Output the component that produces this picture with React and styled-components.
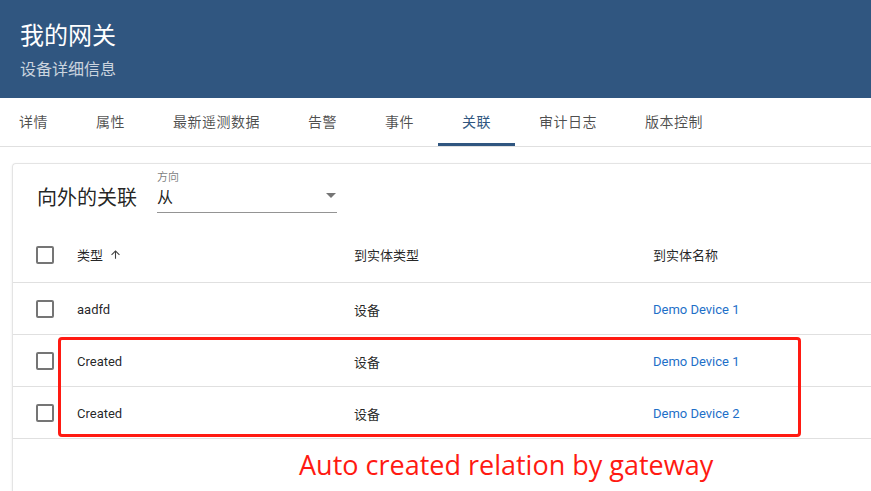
import styled, { createGlobalStyle } from "styled-components";

const GlobalStyle = createGlobalStyle`
  body {
    margin: 0;
    font-family: Roboto, "Noto Sans CJK SC", sans-serif;
    background: #fff;
    overflow: hidden;
  }
`;

const Page = styled.div`
  width: 871px;
  height: 491px;
  position: relative;
  overflow: hidden;
`;

const Header = styled.div`
  background: #305680;
  height: 98px;
  padding: 18px 20px 0;
  box-sizing: border-box;
  color: #fff;
`;

const Title = styled.h1`
  margin: 0;
  font-size: 24px;
  font-weight: 400;
  line-height: 32px;
  font-family: "Noto Sans CJK SC", sans-serif;
`;

const Subtitle = styled.div`
  margin-top: 7px;
  font-size: 16px;
  line-height: 22px;
  color: rgba(255, 255, 255, 0.75);
  font-family: "Noto Sans CJK SC", sans-serif;
`;

const TabBar = styled.div`
  display: flex;
  height: 48px;
  border-bottom: 1px solid #e0e0e0;
`;

const Tab = styled.div`
  display: flex;
  align-items: center;
  padding: 0 24px;
  font-size: 14px;
  letter-spacing: 0.5px;
  font-family: "Noto Sans CJK SC", sans-serif;
  color: ${(p) => (p.active ? "#305680" : "rgba(0,0,0,0.7)")};
  border-bottom: 3px solid ${(p) => (p.active ? "#305680" : "transparent")};
  box-sizing: border-box;

  &:first-child {
    padding-left: 19px;
  }
`;

const Body = styled.div`
  padding: 16px 0 0 12px;
`;

const Card = styled.div`
  border: 1px solid #e4e4e4;
  border-right: none;
  border-radius: 4px 0 0 0;
  box-shadow: 0 1px 3px rgba(0, 0, 0, 0.08);
  height: 400px;
`;

const CardHeader = styled.div`
  display: flex;
  align-items: flex-end;
  height: 66px;
  padding: 0 0 17px 24px;
  box-sizing: border-box;
`;

const CardTitle = styled.div`
  font-size: 20px;
  font-family: "Noto Sans CJK SC", sans-serif;
  color: rgba(0, 0, 0, 0.87);
  margin-right: 20px;
  line-height: 28px;
  padding-bottom: 2px;
`;

const Field = styled.div`
  width: 180px;
  display: flex;
  flex-direction: column;
`;

const FieldLabel = styled.div`
  font-size: 11px;
  color: rgba(0, 0, 0, 0.54);
  font-family: "Noto Sans CJK SC", sans-serif;
  line-height: 14px;
`;

const Select = styled.div`
  display: flex;
  align-items: center;
  justify-content: space-between;
  height: 30px;
  padding-bottom: 4px;
  border-bottom: 1px solid rgba(0, 0, 0, 0.42);
  box-sizing: border-box;
  font-size: 16px;
  color: rgba(0, 0, 0, 0.87);
  font-family: "Noto Sans CJK SC", sans-serif;
`;

const Arrow = styled.div`
  width: 0;
  height: 0;
  border-left: 5px solid transparent;
  border-right: 5px solid transparent;
  border-top: 5px solid rgba(0, 0, 0, 0.54);
  margin-right: 1px;
`;

const Table = styled.div``;

const Row = styled.div`
  display: grid;
  grid-template-columns: 64px 277px 299px 1fr;
  align-items: center;
  height: ${(p) => (p.head ? "53px" : "52px")};
  padding-bottom: ${(p) => (p.head ? "3px" : "0")};
  box-sizing: border-box;
  border-bottom: 1px solid #e0e0e0;
  font-size: 13px;
  color: rgba(0, 0, 0, 0.87);
`;

const CheckCell = styled.div`
  display: flex;
  padding-left: 23px;
`;

const Checkbox = styled.div`
  width: 18px;
  height: 18px;
  border: 2px solid rgba(0, 0, 0, 0.54);
  border-radius: 2px;
  box-sizing: border-box;
`;

const HeadCell = styled.div`
  display: flex;
  align-items: center;
  gap: 6px;
  font-family: "Noto Sans CJK SC", sans-serif;
  color: rgba(0, 0, 0, 0.87);
`;

const Cell = styled.div`
  padding-top: 1px;
  font-family: ${(p) =>
    p.cjk ? '"Noto Sans CJK SC", sans-serif' : "Roboto, sans-serif"};
`;

const Link = styled.span`
  padding-top: 1px;
  color: #1e6fc8;
  font-family: Roboto, sans-serif;
`;

const Highlight = styled.div`
  position: absolute;
  left: 58px;
  top: 337px;
  width: 743px;
  height: 100px;
  border: 3px solid #ff1a12;
  border-radius: 4px;
  box-sizing: border-box;
  pointer-events: none;
`;

const Note = styled.div`
  position: absolute;
  left: 299px;
  top: 447px;
  font-size: 27px;
  line-height: 36px;
  color: #ff1a12;
  font-family: "Open Sans", sans-serif;
`;

const tabs = ["详情", "属性", "最新遥测数据", "告警", "事件", "关联", "审计日志", "版本控制"];

const rows = [
  { type: "aadfd", entity: "设备", name: "Demo Device 1" },
  { type: "Created", entity: "设备", name: "Demo Device 1" },
  { type: "Created", entity: "设备", name: "Demo Device 2" },
];

const App = () => {
  return (
    <Page>
      <GlobalStyle />
      <Header>
        <Title>我的网关</Title>
        <Subtitle>设备详细信息</Subtitle>
      </Header>
      <TabBar>
        {tabs.map((t) => (
          <Tab key={t} active={t === "关联"}>
            {t}
          </Tab>
        ))}
      </TabBar>
      <Body>
        <Card>
          <CardHeader>
            <CardTitle>向外的关联</CardTitle>
            <Field>
              <FieldLabel>方向</FieldLabel>
              <Select>
                <span>从</span>
                <Arrow />
              </Select>
            </Field>
          </CardHeader>
          <Table>
            <Row head>
              <CheckCell>
                <Checkbox />
              </CheckCell>
              <HeadCell>
                类型
                <svg width="13" height="13" viewBox="0 0 24 24">
                  <path
                    fill="rgba(0,0,0,0.75)"
                    d="M4 12l1.41 1.41L11 7.83V20h2V7.83l5.58 5.59L20 12l-8-8-8 8z"
                  />
                </svg>
              </HeadCell>
              <HeadCell>到实体类型</HeadCell>
              <HeadCell>到实体名称</HeadCell>
            </Row>
            {rows.map((r, i) => (
              <Row key={i}>
                <CheckCell>
                  <Checkbox />
                </CheckCell>
                <Cell>{r.type}</Cell>
                <Cell cjk>{r.entity}</Cell>
                <Link>{r.name}</Link>
              </Row>
            ))}
          </Table>
        </Card>
      </Body>
      <Highlight />
      <Note>Auto created relation by gateway</Note>
    </Page>
  );
};

export default App;
